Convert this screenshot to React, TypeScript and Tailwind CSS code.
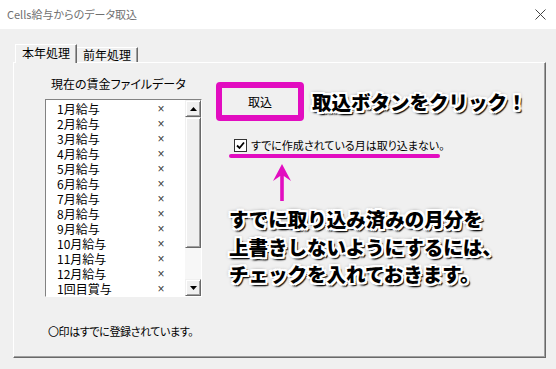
import React from "react";

const items = [
  "1月給与",
  "2月給与",
  "3月給与",
  "4月給与",
  "5月給与",
  "6月給与",
  "7月給与",
  "8月給与",
  "9月給与",
  "10月給与",
  "11月給与",
  "12月給与",
  "1回目賞与",
];

function Arrow({ up }: { up: boolean }) {
  return (
    <svg width="7" height="4" viewBox="0 0 7 4">
      {up ? <polygon points="3.5,0 7,4 0,4" fill="#000" /> : <polygon points="0,0 7,0 3.5,4" fill="#000" />}
    </svg>
  );
}

const outset =
  "bg-[#f0f0f0] border border-t-[#f0f0f0] border-l-[#f0f0f0] border-r-[#696969] border-b-[#696969] shadow-[inset_1px_1px_0_#ffffff,inset_-1px_-1px_0_#a0a0a0]";

const pop =
  "font-black text-black [font-feature-settings:normal] [text-shadow:-2px_-2px_0_#fff,2px_-2px_0_#fff,-2px_2px_0_#fff,2px_2px_0_#fff,0_-2px_0_#fff,0_2px_0_#fff,-2px_0_0_#fff,2px_0_0_#fff,3px_3px_1px_#111,0_0_4px_#222,1px_3px_2px_#111]";

export default function App() {
  return (
    <div className="w-[556px] h-[369px] flex flex-col overflow-hidden font-['Noto_Sans_CJK_JP',sans-serif] [font-feature-settings:'palt'] text-[12px] text-black">
      {/* title bar */}
      <div className="h-[29px] bg-white flex items-center justify-between pl-[7px] pr-[10px]">
        <span className="text-[11px] text-[#707070] leading-none">Cells給与からのデータ取込</span>
        <svg width="11" height="11" viewBox="0 0 11 11">
          <path d="M0.5 0.5 L10.5 10.5 M10.5 0.5 L0.5 10.5" stroke="#444" strokeWidth="1" />
        </svg>
      </div>

      {/* body */}
      <div className="flex-1 bg-[#f0f0f0] pl-[13px] pt-[15px]">
        {/* tabs */}
        <div className="flex items-end h-[18px] pl-[2px]">
          <div className="relative z-10 h-[19px] mb-[-1px] w-[62px] bg-[#f0f0f0] border-t border-l border-t-white border-l-white border-r border-r-[#696969] shadow-[inset_-1px_0_0_#a0a0a0] flex items-start justify-center pt-[1px] leading-[14px] text-[12px]">
            本年処理
          </div>
          <div className="h-[15px] w-[61px] bg-[#f0f0f0] border-t border-t-white border-r border-r-[#696969] shadow-[inset_-1px_0_0_#a0a0a0] flex items-start justify-center leading-[14px] text-[12px]">
            前年処理
          </div>
        </div>

        {/* panel */}
        <div className="w-[533px] h-[296px] border border-t-white border-l-white border-r-[#696969] border-b-[#696969] shadow-[inset_-1px_-1px_0_#a0a0a0] flex pl-[31px] pt-[14px]">
          {/* left column */}
          <div className="w-[157px] flex flex-col">
            <div className="ml-[6px] h-[14px] leading-[14px] whitespace-nowrap">現在の賃金ファイルデータ</div>
            <div className="mt-[8px] w-[157px] h-[198px] bg-white border border-t-[#828282] border-l-[#828282] border-r-white border-b-white flex">
              <div className="flex-1 flex flex-col pt-[1px]">
                {items.map((t) => (
                  <div key={t} className="h-[15px] flex items-center overflow-hidden">
                    <span className="pl-[11px] w-[110px] text-[12px] leading-[14px] whitespace-nowrap">{t}</span>
                    <span className="w-[10px] text-center font-['Liberation_Sans',sans-serif] text-[12px] leading-[14px] text-[#3a3a3a]">×</span>
                  </div>
                ))}
              </div>
              <div className="w-[16px] h-[196px] flex flex-col">
                <div className={`h-[17px] ${outset} flex items-center justify-center`}>
                  <Arrow up />
                </div>
                <div className={`h-[131px] ${outset}`} />
                <div className="h-[31px] bg-[#f7f7f7]" />
                <div className={`h-[17px] ${outset} flex items-center justify-center`}>
                  <Arrow up={false} />
                </div>
              </div>
            </div>
            <div className="mt-[27px] ml-[3px] h-[14px] leading-[14px] whitespace-nowrap text-[11px] tracking-[-0.4px]">〇印はすでに登録されています。</div>
          </div>

          {/* right column */}
          <div className="ml-[14px] flex flex-col">
            <div className="mt-[5px] flex items-center">
              <div className="w-[88px] h-[39px] rounded-[4px] border-[6px] border-[#e20dc0] bg-[#f0f0f0] flex items-center justify-center">
                <span className="leading-none">取込</span>
              </div>
              <div className={`ml-[8px] text-[19.5px] leading-[24px] whitespace-nowrap ${pop}`}>取込ボタンをクリック！</div>
            </div>

            <div className="mt-[18px] ml-[18px] flex items-center h-[13px]">
              <div className="w-[13px] h-[13px] bg-white border border-[#333] flex items-center justify-center">
                <svg width="9" height="9" viewBox="0 0 9 9">
                  <path d="M1 4.5 L3.5 7 L8 1.5" stroke="#000" strokeWidth="1.8" fill="none" />
                </svg>
              </div>
              <span className="ml-[4px] leading-[13px] whitespace-nowrap text-[11px]">すでに作成されている月は取り込まない。</span>
            </div>
            <div className="mt-[2px] ml-[13px] w-[211px] h-[4px] rounded-full bg-[#e20dc0]" />

            <svg className="mt-[6px] ml-[57px]" width="18" height="37" viewBox="0 0 18 37">
              <polygon points="9,0 18,17 10.8,12 10.8,37 7.2,37 7.2,12 0,17" fill="#e20dc0" />
            </svg>

            <div className={`mt-[4px] ml-[13px] text-[19.5px] leading-[27.5px] whitespace-nowrap ${pop}`}>
              <div>すでに取り込み済みの月分を</div>
              <div>上書きしないようにするには、</div>
              <div>チェックを入れておきます。</div>
            </div>
          </div>
        </div>
      </div>
    </div>
  );
}
